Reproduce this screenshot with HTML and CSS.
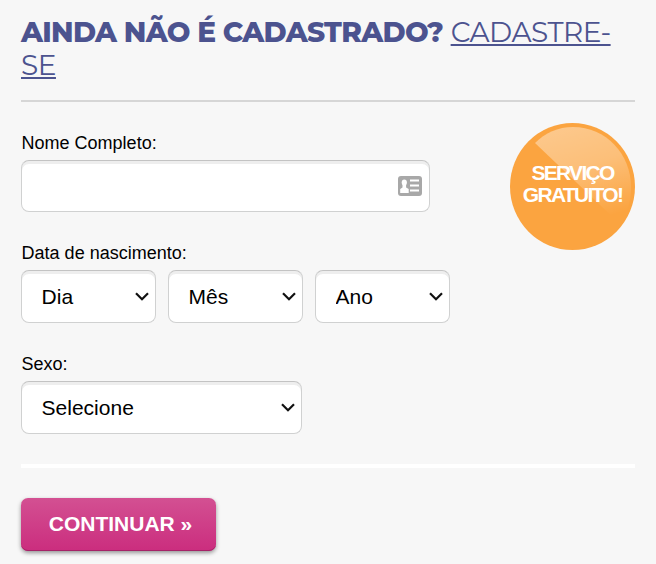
FILE: index.html
```html
<!DOCTYPE html>
<html lang="pt-BR">
<head>
    <meta charset="UTF-8">
    <meta name="viewport" content="width=device-width, initial-scale=1.0">
    <title>Cadastro</title>
    <link rel="stylesheet" href="styles.css">
</head>
<body>
    <div class="container">
        <h2><strong>AINDA NÃO É CADASTRADO?</strong> <a href="#">CADASTRE-<br>SE</a></h2>

        <form class="register-form">
            <div class="form-top">
                <div class="field field-name">
                    <label for="nome">Nome Completo:</label>
                    <div class="control">
                        <input type="text" id="nome">
                        <svg class="card-icon" viewBox="0 0 24 20" width="24" height="20">
                            <rect width="24" height="20" rx="3" fill="#a8a8a8"/>
                            <ellipse cx="6.300" cy="6.500" rx="2.600" ry="3" fill="#fff"/>
                            <path d="M4.500 8h3.600v3.500l2.600 1.500V17h-8.500v-4L4.500 11.500z" fill="#fff"/>
                            <path d="M12 4.500H21M12 9.500H21M12 14.500H21" stroke="#fff" stroke-width="2.200"/>
                        </svg>
                    </div>
                </div>

                <!-- Free service badge -->
                <div class="badge">
                    <svg class="badge-shape" viewBox="0 0 125 127" width="125" height="127">
                        <defs>
                            <linearGradient id="shine" x1="0.200" y1="0" x2="0.500" y2="1">
                                <stop offset="0" stop-color="#fff" stop-opacity="0.400"/>
                                <stop offset="0.450" stop-color="#fff" stop-opacity="0.300"/>
                                <stop offset="1" stop-color="#fff" stop-opacity="0"/>
                            </linearGradient>
                        </defs>
                        <ellipse cx="62.500" cy="63.500" rx="62.500" ry="63.500" fill="#fba440"/>
                        <path d="M25 20C35 10 48 4 63 4C96 4 121 31 121 64C121 79 117 91 110 101Z" fill="url(#shine)"/>
                    </svg>
                    <span>SERVIÇO<br>GRATUITO!</span>
                </div>
            </div>

            <div class="field">
                <label for="dia">Data de nascimento:</label>
                <div class="date-row">
                    <div class="control">
                        <select id="dia"><option>Dia</option></select>
                        <svg class="arrow" viewBox="0 0 14 9" width="14" height="9"><path d="M1 1.200l6 6 6-6"/></svg>
                    </div>
                    <div class="control">
                        <select id="mes"><option>Mês</option></select>
                        <svg class="arrow" viewBox="0 0 14 9" width="14" height="9"><path d="M1 1.200l6 6 6-6"/></svg>
                    </div>
                    <div class="control">
                        <select id="ano"><option>Ano</option></select>
                        <svg class="arrow" viewBox="0 0 14 9" width="14" height="9"><path d="M1 1.200l6 6 6-6"/></svg>
                    </div>
                </div>
            </div>

            <div class="field field-gender">
                <label for="sexo">Sexo:</label>
                <div class="control">
                    <select id="sexo"><option>Selecione</option></select>
                    <svg class="arrow" viewBox="0 0 14 9" width="14" height="9"><path d="M1 1.200l6 6 6-6"/></svg>
                </div>
            </div>

            <div class="form-actions">
                <button type="submit">CONTINUAR »</button>
            </div>
        </form>
    </div>
</body>
</html>
```
FILE: styles.css
```css
* {
    margin: 0;
    padding: 0;
    box-sizing: border-box;
}

body {
    min-height: 100vh;
    padding: 16px 21px 0;
    font-family: "Liberation Sans", Arial, sans-serif;
    background-color: #f7f7f7;
    color: #000;
}

.container {
    width: 614px;
}

h2 {
    height: 86px;
    border-bottom: 2px solid #d6d6d6;
    font-family: Montserrat, Inter, sans-serif;
    font-size: 28px;
    font-weight: 500;
    line-height: 33px;
    color: #4c538f;
    white-space: nowrap;
}

h2 strong {
    font-weight: 800;
    letter-spacing: -0.7px;
}

h2 a {
    color: #4c538f;
    font-weight: 400;
    letter-spacing: -0.5px;
    text-decoration: underline;
    text-decoration-thickness: 2px;
    text-underline-offset: 2px;
    text-decoration-skip-ink: none;
}

.form-top {
    display: flex;
    justify-content: space-between;
    height: 140px;
    padding-top: 21px;
}

.field-name {
    width: 409px;
    padding-top: 9px;
}

label {
    display: block;
    height: 28px;
    font-size: 18px;
    line-height: 22px;
    padding-left: 0.6px;
}

.control {
    position: relative;
}

input,
select {
    display: block;
    width: 100%;
    height: 53px;
    padding: 0 19.6px;
    border: 1px solid #d0d1d1;
    border-top-color: #c3c3c3;
    border-radius: 8px;
    background-color: #fff;
    box-shadow: inset 0 3px 0 #eee;
    font-family: inherit;
    font-size: 21px;
    color: #000;
    appearance: none;
}

input {
    height: 52px;
}

.card-icon {
    position: absolute;
    top: 16px;
    right: 8px;
}

.arrow {
    position: absolute;
    top: 22px;
    right: 7px;
    fill: none;
    stroke: #111;
    stroke-width: 2.2;
    pointer-events: none;
}

.badge {
    position: relative;
    width: 125px;
    height: 127px;
    padding-top: 39px;
    text-align: center;
    font-size: 21px;
    font-weight: bold;
    line-height: 22px;
    letter-spacing: -1.7px;
    color: #fff;
}

.badge-shape {
    position: absolute;
    top: 0;
    left: 0;
}

.badge span {
    position: relative;
}

.date-row {
    display: flex;
    gap: 12px;
}

.date-row .control {
    width: 135px;
}

.field-gender {
    width: 281px;
    padding-top: 30px;
}

.form-actions {
    margin-top: 30px;
    padding-top: 30px;
    border-top: 4px solid #fff;
}

button {
    display: block;
    width: 195px;
    height: 53px;
    padding: 0 0 2px 4px;
    border: none;
    border-radius: 7px;
    background: linear-gradient(#d35092, #cb2d7e);
    box-shadow: 0 2px 4px rgba(0, 0, 0, 0.4), inset 0 -1px 0 #a52367;
    font-family: inherit;
    font-size: 21px;
    font-weight: bold;
    color: #fff;
    cursor: pointer;
}
```
